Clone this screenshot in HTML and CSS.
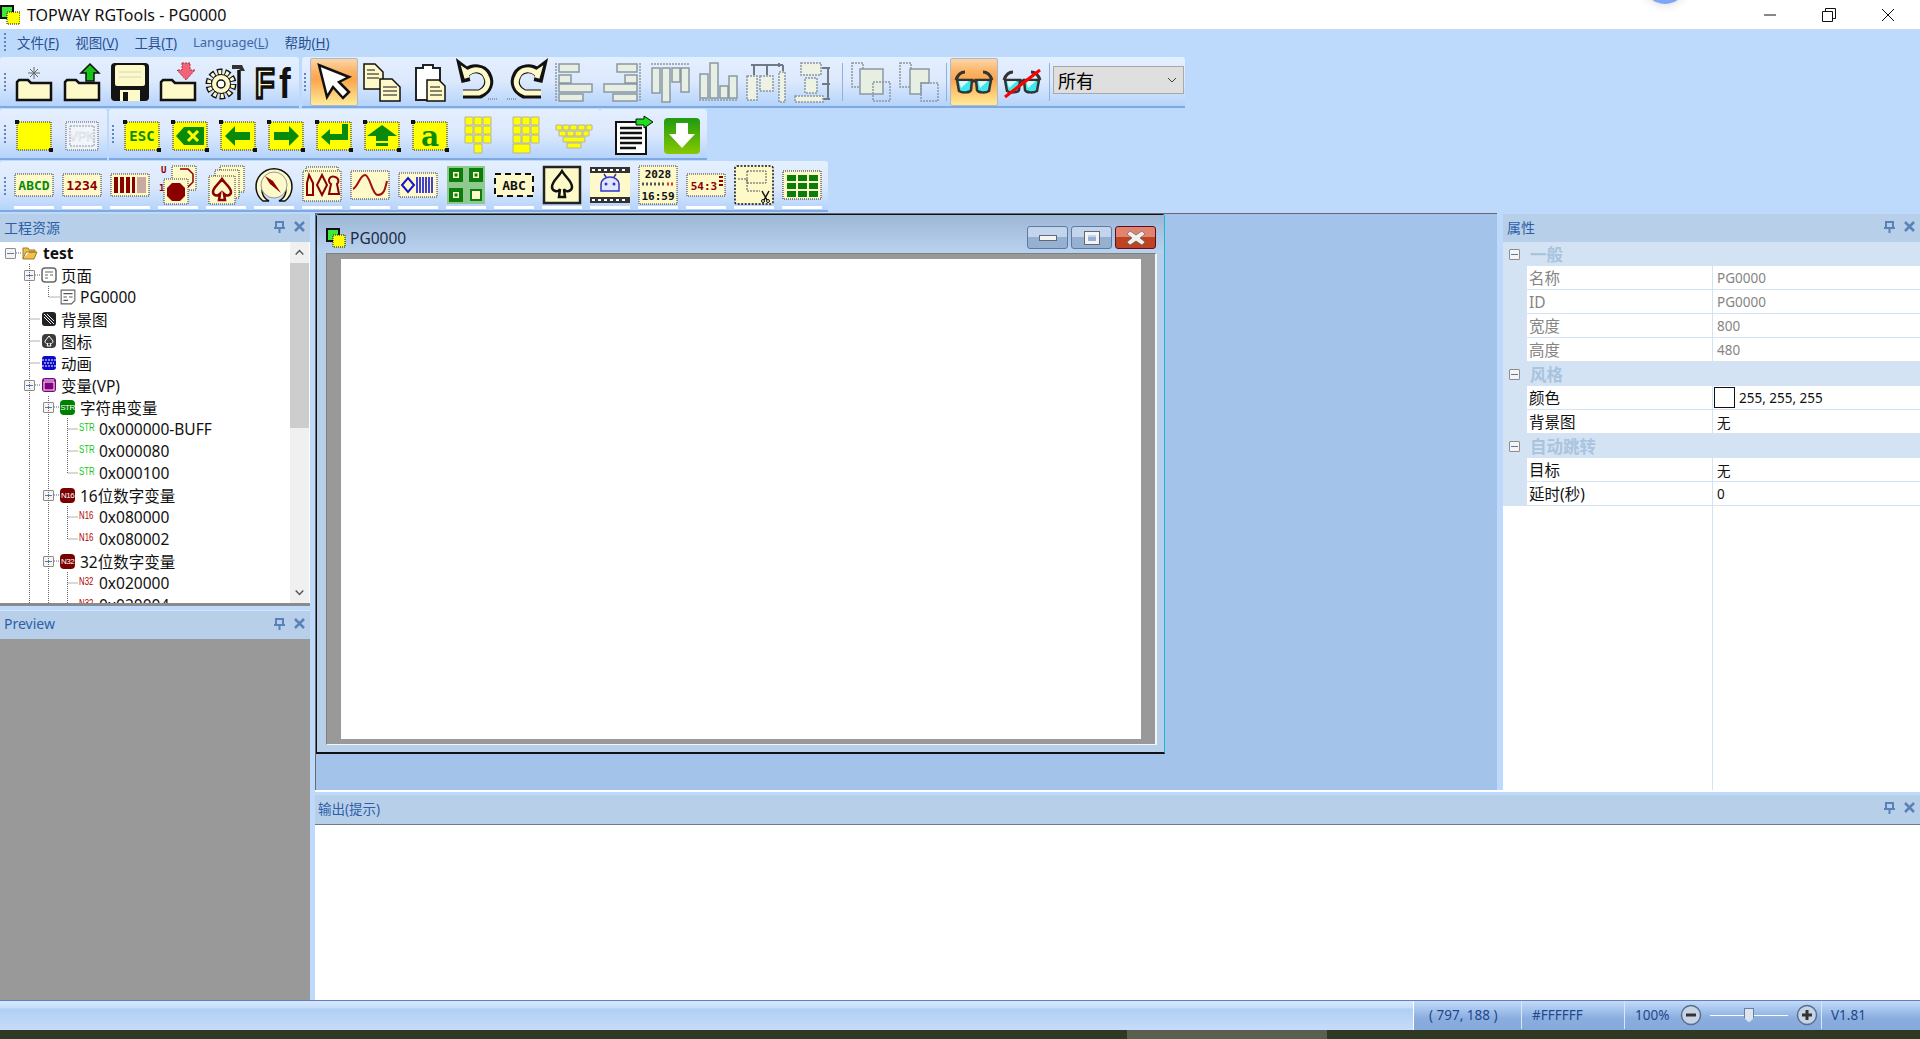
FILE: index.html
```html
<!DOCTYPE html>
<html lang="zh-CN">
<head>
    <meta charset="UTF-8">
    <title>TOPWAY RGTools - PG0000</title>
    <link rel="stylesheet" href="styles.css">
</head>
<body>
    <!-- 标题栏 -->
    <header class="titlebar">
        <svg class="app-icon" viewBox="0 0 20 20"><rect x="1" y="1" width="12" height="12" fill="#3fe83f" stroke="#111" stroke-width="2"/><rect x="7" y="7" width="13" height="12" fill="#ff0" stroke="#111" stroke-dasharray="1 1"/></svg>
        <span class="app-title">TOPWAY RGTools - PG0000</span>
        <div class="win-controls">
            <svg viewBox="0 0 14 14"><path d="M1 7h12" stroke="#111"/></svg>
            <svg viewBox="0 0 14 14"><path d="M.5 3.5h10v10H.5zM3.5 3.5v-3h10v10h-3" fill="none" stroke="#111"/></svg>
            <svg viewBox="0 0 14 14"><path d="M1 1l12 12M13 1L1 13" stroke="#111"/></svg>
        </div>
    </header>

    <!-- 菜单 -->
    <nav class="menubar">
        <span class="grip"></span>
        <span class="menu-item">文件(<u>F</u>)</span>
        <span class="menu-item">视图(<u>V</u>)</span>
        <span class="menu-item">工具(<u>T</u>)</span>
        <span class="menu-item lang">Language(<u>L</u>)</span>
        <span class="menu-item">帮助(<u>H</u>)</span>
    </nav>

    <!-- 工具栏第一行 -->
    <div class="tool-row">
        <div class="band band-file">
            <span class="grip"></span>
            <span class="tool"><svg class="ic" viewBox="0 0 40 40"><path class="cream" d="M3 38V20l2-2h9l3 3h20v17z"/><path d="M20 5v12M14 11h12M16 7l8 8M24 7l-8 8" stroke="#666"/></svg></span>
            <span class="tool"><svg class="ic" viewBox="0 0 40 40"><path class="cream" d="M3 38V20l2-2h9l3 3h20v17z"/><path d="M28 2l9 9h-5v8h-8v-8h-5z" fill="#19c219" stroke="#111" stroke-width="1.5"/></svg></span>
            <span class="tool"><svg class="ic" viewBox="0 0 40 40"><rect x="1" y="1" width="38" height="38" rx="4" fill="#141414"/><rect x="5" y="3" width="30" height="21" rx="2" fill="#fdf9c9"/><path d="M9 10h22M9 15h22" stroke="#cfd8c0"/><rect x="10" y="28" width="20" height="11" fill="#fdf9c9"/><rect x="13" y="30" width="5" height="9" fill="#141414"/></svg></span>
            <span class="tool"><svg class="ic" viewBox="0 0 40 40"><path class="cream" d="M3 38V20l2-2h9l3 3h20v17z"/><path d="M24 1h8v7h5l-9 10-9-10h5z" fill="#f2627b" stroke="#a33" stroke-dasharray="2 1"/></svg></span>
            <span class="tool"><svg class="ic" viewBox="0 0 40 40"><circle cx="15" cy="22" r="12" fill="none" stroke="#111" stroke-width="7" stroke-dasharray="5 2.5"/><circle cx="15" cy="22" r="12" fill="none" stroke="#fdf9c9" stroke-width="4" stroke-dasharray="3 4.5" stroke-dashoffset="-1"/><circle cx="15" cy="22" r="9.500" fill="#fdf9c9" stroke="#111"/><circle cx="15" cy="22" r="4" fill="#fff" stroke="#111" stroke-width="1.500"/><path d="M33 8v30" stroke="#111" stroke-width="3.500"/><path d="M26 3h10l3 6h-4l-2-2h-7z" fill="#333"/></svg></span>
            <span class="tool"><svg class="ic" viewBox="0 0 40 40"><text class="ff-big" transform="translate(1 36) scale(1 1.35)">F</text><text class="ff-small" transform="translate(25 36) scale(1.1 1.35)">f</text></svg></span>
        </div>
        <div class="band band-edit">
            <span class="grip"></span>
            <span class="tool selected"><svg class="ic" viewBox="0 0 40 40"><path d="M5 3l8 32 6-10 10 11 6-6-10-10 10-5z" fill="#fff" stroke="#111" stroke-width="2.5"/></svg></span>
            <span class="tool"><svg class="ic" viewBox="0 0 40 40"><path class="cream thin" d="M2 2h11l8 8v17H2z"/><path class="cream thin" d="M18 17h12l8 8v14H18z"/><path d="M5 8h8M5 12h12M5 16h12M21 25h14M21 29h14M21 33h14" stroke="#111"/></svg></span>
            <span class="tool"><svg class="ic" viewBox="0 0 40 40"><path d="M6 6h7v-3h10v3h7v32H6z" fill="#fff" stroke="#222" stroke-width="2"/><path class="cream thin" d="M17 18h12l6 6v15H17z"/><path d="M20 25h10M20 29h12M20 33h12" stroke="#111"/></svg></span>
            <span class="tool"><svg class="ic" viewBox="0 0 40 40"><path d="M8 20L5 7l4 3c6-5 16-4 20 3 4 8 1 15-7 19H5" fill="none" stroke="#111" stroke-width="9"/><path d="M9 16L7 9l3 2c6-5 15-4 18 3 4 7 1 14-7 17H5" fill="none" stroke="#fdf9c9" stroke-width="5"/><path d="M30 37h9" stroke="#666" stroke-dasharray="1 1"/></svg></span>
            <span class="tool"><svg class="ic" viewBox="0 0 40 40"><path d="M32 20l3-13-4 3c-6-5-16-4-20 3-4 8-1 15 7 19h17" fill="none" stroke="#111" stroke-width="9"/><path d="M31 16l2-7-3 2c-6-5-15-4-18 3-4 7-1 14 7 17h16" fill="none" stroke="#fdf9c9" stroke-width="5"/><path d="M1 37h9" stroke="#666" stroke-dasharray="1 1"/></svg></span>
            <span class="tool"><svg class="ic" viewBox="0 0 40 40"><path class="dots" d="M2 1v38"/><path class="off" d="M5 2h20v8H5zM5 13h12v8H5zM5 22h33v8H5zM5 32h24v7H5z"/></svg></span>
            <span class="tool"><svg class="ic" viewBox="0 0 40 40"><path class="dots" d="M38 1v38"/><path class="off" d="M15 2h20v8H15zM23 13h12v8H23zM2 22h33v8H2zM11 32h24v7H11z"/></svg></span>
            <span class="tool"><svg class="ic" viewBox="0 0 40 40"><path class="dots" d="M1 2h38"/><path class="off" d="M2 6h8v25H2zM12 6h8v34h-8zM22 6h8v14h-8zM31 6h8v24h-8z"/></svg></span>
            <span class="tool"><svg class="ic" viewBox="0 0 40 40"><path class="dots" d="M1 38h38"/><path class="off" d="M2 12h8v24H2zM12 1h8v35h-8zM22 24h8v12h-8zM31 14h8v22h-8z"/></svg></span>
            <span class="tool"><svg class="ic" viewBox="0 0 40 40"><path d="M5 3h32M8 3v10M21 3v10M37 3v6M33 1v4" stroke="#6e7a84" stroke-width="2"/><rect class="dots soft" x="1" y="14" width="10" height="24"/><rect class="dots soft" x="14" y="14" width="13" height="15"/><rect class="dots soft" x="33" y="10" width="6" height="30"/></svg></span>
            <span class="tool"><svg class="ic" viewBox="0 0 40 40"><path d="M34 6v32M28 6h8M28 22h8M28 37h8" stroke="#6e7a84" stroke-width="2"/><rect class="dots soft" x="7" y="1" width="20" height="12"/><rect class="dots soft" x="11" y="16" width="12" height="15"/><rect class="dots soft" x="1" y="34" width="28" height="6"/></svg></span>
            <span class="sep"></span>
            <span class="tool"><svg class="ic" viewBox="0 0 40 40"><rect class="dots" x="1" y="1" width="11" height="24"/><rect class="off" x="9" y="7" width="23" height="25"/><rect class="dots" x="22" y="20" width="17" height="19"/></svg></span>
            <span class="tool"><svg class="ic" viewBox="0 0 40 40"><rect class="dots" x="1" y="1" width="11" height="24"/><path class="off" d="M11 7h19v14H22v11H11z"/><rect class="dots" x="22" y="21" width="17" height="18"/></svg></span>
            <span class="sep sep-tight"></span>
            <span class="tool selected"><svg class="ic" viewBox="0 0 40 40"><use href="#glasses"/></svg></span>
            <span class="tool"><svg class="ic" viewBox="0 0 40 40"><use href="#glasses"/><path d="M3 35L38 8" stroke="#f00" stroke-width="3"/></svg></span>
            <span class="sep sep-tight"></span>
            <div class="combo">
                <span>所有</span>
                <svg viewBox="0 0 10 6"><path d="M1 1l4 4 4-4" fill="none" stroke="#444"/></svg>
            </div>
        </div>
    </div>

    <!-- 工具栏第二行 -->
    <div class="tool-row row-keys">
        <div class="band band-base">
            <span class="grip"></span>
            <span class="tool"><svg class="ic" viewBox="0 0 40 40"><use href="#keyframe"/></svg></span>
            <span class="tool"><svg class="ic" viewBox="0 0 40 40"><rect x="4" y="6" width="32" height="28" fill="#edf2f8" stroke="#555" stroke-dasharray="1 1"/><rect x="8" y="10" width="24" height="20" fill="#f2f5fa" stroke="#8a96a6" stroke-dasharray="2 1"/><text class="vpk" x="20" y="25">VPK</text></svg></span>
        </div>
        <div class="band band-keys">
            <span class="grip"></span>
            <span class="tool"><svg class="ic" viewBox="0 0 40 40"><use href="#keyframe"/><text class="esc" x="20" y="25">ESC</text></svg></span>
            <span class="tool"><svg class="ic" viewBox="0 0 40 40"><use href="#keyframe"/><path d="M6 20l8-9h20v18H14z" fill="#0a8a0a"/><path d="M18 15l10 10M28 15L18 25" stroke="#ff0" stroke-width="3"/></svg></span>
            <span class="tool"><svg class="ic" viewBox="0 0 40 40"><use href="#keyframe"/><path d="M7 20l10-10v6h15v8H17v6z" fill="#0a8a0a"/></svg></span>
            <span class="tool"><svg class="ic" viewBox="0 0 40 40"><use href="#keyframe"/><path d="M33 20L23 10v6H8v8h15v6z" fill="#0a8a0a"/></svg></span>
            <span class="tool"><svg class="ic" viewBox="0 0 40 40"><use href="#keyframe"/><path d="M7 21l9-8v5h12V8h6v16H16v5z" fill="#0a8a0a"/></svg></span>
            <span class="tool"><svg class="ic" viewBox="0 0 40 40"><use href="#keyframe"/><path d="M20 9l15 11h-9v5H14v-5H5zM14 27h12v3H14z" fill="#0a8a0a"/></svg></span>
            <span class="tool"><svg class="ic" viewBox="0 0 40 40"><use href="#keyframe"/><text class="key-a" x="20" y="30">a</text></svg></span>
            <span class="tool"><svg class="ic" viewBox="0 0 40 40"><path class="pad" d="M7 1h8v8H7zM16 1h8v8h-8zM25 1h8v8h-8zM7 10h8v8H7zM16 10h8v8h-8zM25 10h8v8h-8zM7 19h8v8H7zM16 19h8v8h-8zM25 19h8v8h-8zM16 28h8v9h-8z"/></svg></span>
            <span class="tool"><svg class="ic" viewBox="0 0 40 40"><path class="pad" d="M7 1h8v8H7zM16 1h8v8h-8zM25 1h8v8h-8zM7 10h8v8H7zM16 10h8v8h-8zM25 10h8v8h-8zM7 19h8v8H7zM16 19h8v8h-8zM25 19h8v8h-8zM7 28h17v9H7z"/></svg></span>
            <span class="tool"><svg class="ic" viewBox="0 0 40 40"><path class="pad" d="M2 9h6v5H2zM9 9h6v5H9zM16 9h7v5h-7zM24 9h7v5h-7zM32 9h6v5h-6zM5 15h7v5H5zM13 15h7v5h-7zM21 15h7v5h-7zM29 15h6v5h-6zM9 21h22v5H9zM13 27h14v5H13z"/></svg></span>
        </div>
        <div class="band band-ctrl">
            <span class="tool"><svg class="ic" viewBox="0 0 40 40"><rect x="2" y="6" width="30" height="32" fill="#fff" stroke="#111" stroke-width="2"/><path d="M6 12h22M6 17h22M6 22h22M6 27h22M6 32h16" stroke="#111" stroke-width="2.5"/><path d="M22 9V3h8V0l9 6-9 6V9z" fill="#19e019" stroke="#111"/></svg></span>
            <span class="tool"><svg class="ic" viewBox="0 0 40 40"><defs><linearGradient id="dlg" x1="0" y1="0" x2="0" y2="1"><stop offset="0" stop-color="#1f9a10"/><stop offset="1" stop-color="#88c800"/></linearGradient></defs><rect x="2" y="2" width="36" height="36" rx="4" fill="url(#dlg)"/><path d="M14 7h12v11h7L20 32 7 18h7z" fill="#fff"/></svg></span>
        </div>
    </div>

    <!-- 工具栏第三行 -->
    <div class="tool-row">
        <div class="band band-vars">
            <span class="grip"></span>
            <span class="tool lined"><svg class="ic" viewBox="0 0 40 40"><rect class="chip" x="1" y="9" width="38" height="22"/><text class="chip-text green" x="20" y="25">ABCD</text></svg></span>
            <span class="tool lined"><svg class="ic" viewBox="0 0 40 40"><rect class="chip" x="1" y="9" width="38" height="22"/><text class="chip-text red" x="20" y="25">1234</text></svg></span>
            <span class="tool lined"><svg class="ic" viewBox="0 0 40 40"><rect class="chip" x="1" y="9" width="38" height="22"/><path d="M4 12h4v16H4zM10 12h4v16h-4zM16 12h4v16h-4zM22 12h3v16h-3z" fill="#8b0000"/><path d="M27 12h9v16h-9z" fill="#c9a9a0"/></svg></span>
            <span class="tool lined"><svg class="ic" viewBox="0 0 40 40"><rect class="chip" x="14" y="1" width="24" height="24"/><path d="M22 4h8l5 5v8l-5 5" fill="none" stroke="#8b0000" stroke-width="1.5"/><rect class="chip" x="6" y="14" width="24" height="25"/><path d="M14 18h8l5 5v8l-5 5h-8l-5-5v-8z" fill="#8b0000"/><text class="mini red" x="3" y="8">U</text><text class="mini red" x="1" y="26">1</text></svg></span>
            <span class="tool lined"><svg class="ic" viewBox="0 0 40 40"><rect class="chip" x="14" y="1" width="24" height="26"/><rect class="chip" x="9" y="5" width="24" height="28"/><rect class="chip" x="3" y="11" width="26" height="28"/><path d="M16 14c4 6 9 8 9 13 0 3-4 5-7 2l1 6h-6l1-6c-3 3-7 1-7-2 0-5 5-7 9-13z" fill="none" stroke="#8b0000" stroke-width="2.5"/></svg></span>
            <span class="tool lined"><svg class="ic" viewBox="0 0 40 40"><path d="M9 36a18 18 0 1 1 22 0h-6a12 12 0 1 0-10 0z" fill="#fdf9c9" stroke="#111" stroke-width="1.5"/><circle cx="20" cy="20" r="13" fill="#fdf9c9" stroke="#999"/><path d="M11 11l8 5 8 12-11-9z" fill="#8b0000"/></svg></span>
            <span class="tool lined"><svg class="ic" viewBox="0 0 40 40"><rect class="chip" x="4" y="2" width="32" height="6"/><rect class="chip" x="1" y="6" width="38" height="30"/><path d="M7 10l4 8v12H5V18zM20 10l5 10-5 10-5-10zM33 12a4 4 0 0 1 2 7l2 10H27l2-10a4 4 0 0 1 4-7z" fill="none" stroke="#8b0000" stroke-width="2"/></svg></span>
            <span class="tool lined"><svg class="ic" viewBox="0 0 40 40"><rect class="chip" x="1" y="6" width="38" height="28"/><path d="M3 24c5-2 7-14 12-14s7 20 13 20 7-6 9-14" fill="none" stroke="#a01010" stroke-width="2"/></svg></span>
            <span class="tool lined"><svg class="ic" viewBox="0 0 40 40"><rect class="chip" x="1" y="8" width="38" height="24"/><path d="M10 13l6 7-6 7-6-7z" fill="none" stroke="#1515d0" stroke-width="2"/><path d="M19 12v16M22 12v16M25 12v16M28 12v16M31 12v16M34 12v16" stroke="#1515d0" stroke-width="1.6"/></svg></span>
            <span class="tool lined"><svg class="ic" viewBox="0 0 40 40"><rect x="1" y="1" width="38" height="38" fill="#8fc98f"/><path d="M3 3h14v14H3zM23 3h14v14H23zM3 23h14v14H3z" fill="#0a7d0a"/><path d="M7 7h6v6H7zM27 7h6v6h-6zM7 27h6v6H7z" fill="#fdf9c9"/><path d="M8.500 8.500h3v3h-3zM28.500 8.500h3v3h-3zM8.500 28.500h3v3h-3z" fill="#0a7d0a"/><rect x="25" y="25" width="10" height="10" fill="#fdf9c9" stroke="#0a7d0a" stroke-width="2"/></svg></span>
            <span class="tool lined"><svg class="ic" viewBox="0 0 40 40"><rect x="1" y="9" width="38" height="22" fill="#fdf9c9" stroke="#111" stroke-width="2" stroke-dasharray="6 4"/><text class="chip-text dark" x="20" y="25">ABC</text></svg></span>
            <span class="tool lined"><svg class="ic" viewBox="0 0 40 40"><rect x="2" y="2" width="36" height="36" fill="#fdf9c9" stroke="#222" stroke-width="2.5"/><path d="M20 6c4 7 10 10 10 16 0 4-6 6-8 2l1 8h-6l1-8c-2 4-8 2-8-2 0-6 6-9 10-16z" fill="none" stroke="#111" stroke-width="2.5"/></svg></span>
            <span class="tool lined"><svg class="ic" viewBox="0 0 40 40"><rect x="0" y="2" width="40" height="36" fill="#333"/><path d="M0 8h40v24H0z" fill="#fdf9c9"/><path d="M2 4h3v2H2zM8 4h3v2H8zM14 4h3v2h-3zM20 4h3v2h-3zM26 4h3v2h-3zM32 4h3v2h-3zM2 34h3v2H2zM8 34h3v2H8zM14 34h3v2h-3zM20 34h3v2h-3zM26 34h3v2h-3zM32 34h3v2h-3z" fill="#fff"/><path d="M11 26v-7a9 7 0 0 1 18 0v7zM16 12l-2-3M24 12l2-3" fill="#dfe6ff" stroke="#3434c8" stroke-width="1.500"/><circle cx="16" cy="19" r="1.500" fill="#3434c8"/><circle cx="24" cy="19" r="1.500" fill="#3434c8"/></svg></span>
            <span class="tool lined"><svg class="ic" viewBox="0 0 40 40"><rect class="chip" x="1" y="1" width="38" height="38"/><text class="date" x="20" y="13">2028</text><path d="M4 19h24" stroke="#555" stroke-dasharray="2 2" stroke-width="3"/><path d="M29 19h8" stroke="#d33" stroke-dasharray="2 2" stroke-width="3"/><text class="date" x="20" y="35">16:59</text></svg></span>
            <span class="tool lined"><svg class="ic" viewBox="0 0 40 40"><rect class="chip" x="1" y="9" width="38" height="22"/><text class="chip-text red small" x="18" y="25">54:3</text><path d="M33 12h4M33 16h4M33 20h4" stroke="#8b0000" stroke-width="2"/></svg></span>
            <span class="tool lined"><svg class="ic" viewBox="0 0 40 40"><rect x="1" y="1" width="38" height="38" rx="2" fill="#fdf9c9" stroke="#111" stroke-dasharray="2 1.500" stroke-width="1.500"/><path d="M13 6h19v12H13zM4 14h9v12h13" fill="none" stroke="#555" stroke-dasharray="2 1"/><path d="M28 26l5 9M35 26l-5 9" stroke="#111" stroke-width="1.500"/><circle cx="29" cy="36" r="1.500" fill="none" stroke="#111"/><circle cx="34" cy="36" r="1.500" fill="none" stroke="#111"/></svg></span>
            <span class="tool lined"><svg class="ic" viewBox="0 0 40 40"><rect x="1" y="6" width="38" height="28" fill="#fdf9c9" stroke="#222" stroke-dasharray="1 1"/><path d="M5 10h9v6H5zM16 10h9v6h-9zM27 10h9v6h-9zM5 18h9v6H5zM16 18h9v6h-9zM27 18h9v6h-9zM5 26h9v6H5zM16 26h9v6h-9zM27 26h9v6h-9z" fill="#0a7d0a"/></svg></span>
        </div>
    </div>

    <!-- 主工作区 -->
    <main class="workspace">
        <aside class="left-col">
            <section class="dock project-dock">
                <div class="dock-head"><span>工程资源</span><svg class="dock-btns" viewBox="0 0 32 14"><use href="#dock-btns"/></svg></div>
                <div class="tree-wrap">
                    <div class="tree">
                        <svg class="tree-lines" viewBox="0 0 290 361"><path d="M16 11H22M29.500 22V361M35 33H40M48.500 44V55H60M29.500 77H40M29.500 99H40M29.500 121H40M35 143H40M48.500 154V361M54 165H60M54 253H60M54 319H60M67.500 176V231H78M67.500 187H78M67.500 209H78M67.500 264V297H78M67.500 275H78M67.500 330V361M67.500 341H78" fill="none" stroke="#666" stroke-dasharray="1 1"/></svg>
                        <div class="node lv0"><span class="toggle"></span><svg class="node-ic" viewBox="0 0 16 16"><path d="M1 14V3h5l1 2h6v2H4l-3 7h11l3-7H7" fill="#f3c04d" stroke="#9a7a2a"/></svg><b>test</b></div>
                        <div class="node lv1"><span class="toggle"></span><svg class="node-ic" viewBox="0 0 16 16"><rect x="1" y="1" width="14" height="14" rx="3" fill="#fff" stroke="#666" stroke-width="1.500"/><path d="M4 5h8M4 8h3M9 8h3M4 11h3" stroke="#666"/></svg><span>页面</span></div>
                        <div class="node lv2 leaf"><svg class="node-ic" viewBox="0 0 14 14"><path d="M1 1h12v9l-3 3H1z" fill="#fff" stroke="#666"/><path d="M3 4h8M3 7h3M8 7h3M3 10h4" stroke="#555"/></svg><span>PG0000</span></div>
                        <div class="node lv1 nochild"><svg class="node-ic" viewBox="0 0 16 16"><rect x="1" y="1" width="14" height="14" rx="3" fill="#222"/><path d="M3 6l7 7M3 3l10 10M6 3l7 7" stroke="#eee"/></svg><span>背景图</span></div>
                        <div class="node lv1 nochild"><svg class="node-ic" viewBox="0 0 16 16"><rect x="1" y="1" width="14" height="14" rx="4" fill="#3c3c3c"/><path d="M8 3l4 5c0 3-3 3-3 2l1 3H6l1-3c0 1-3 1-3-2z" fill="none" stroke="#fff"/></svg><span>图标</span></div>
                        <div class="node lv1 nochild"><svg class="node-ic" viewBox="0 0 16 16"><rect x="1" y="1" width="14" height="14" rx="3" fill="#0a0ac8"/><path d="M1 5h14M1 11h14M3 8h10" stroke="#fff" stroke-dasharray="2 1"/></svg><span>动画</span></div>
                        <div class="node lv1"><span class="toggle"></span><svg class="node-ic" viewBox="0 0 16 16"><rect x="1" y="1" width="14" height="14" rx="3" fill="#800080"/><rect x="3" y="5" width="10" height="8" fill="none" stroke="#fff"/><path d="M3 3h10" stroke="#fff"/></svg><span>变量(VP)</span></div>
                        <div class="node lv2"><span class="toggle"></span><span class="badge b-str">STR</span><span>字符串变量</span></div>
                        <div class="node lv3"><span class="tag t-str">STR</span><span>0x000000-BUFF</span></div>
                        <div class="node lv3"><span class="tag t-str">STR</span><span>0x000080</span></div>
                        <div class="node lv3"><span class="tag t-str">STR</span><span>0x000100</span></div>
                        <div class="node lv2"><span class="toggle"></span><span class="badge b-num">N16</span><span>16位数字变量</span></div>
                        <div class="node lv3"><span class="tag t-num">N16</span><span>0x080000</span></div>
                        <div class="node lv3"><span class="tag t-num">N16</span><span>0x080002</span></div>
                        <div class="node lv2"><span class="toggle"></span><span class="badge b-num">N32</span><span>32位数字变量</span></div>
                        <div class="node lv3"><span class="tag t-num">N32</span><span>0x020000</span></div>
                        <div class="node lv3"><span class="tag t-num">N32</span><span>0x020004</span></div>
                    </div>
                    <div class="scrollbar">
                        <svg viewBox="0 0 20 20"><path d="M6 12l4-4 4 4" fill="none" stroke="#555" stroke-width="1.500"/></svg>
                        <div class="scroll-track"><div class="scroll-thumb"></div></div>
                        <svg viewBox="0 0 20 20"><path d="M6 8l4 4 4-4" fill="none" stroke="#555" stroke-width="1.500"/></svg>
                    </div>
                </div>
            </section>
            <section class="dock preview-dock">
                <div class="dock-head"><span>Preview</span><svg class="dock-btns" viewBox="0 0 32 14"><use href="#dock-btns"/></svg></div>
                <div class="preview-body"></div>
            </section>
        </aside>

        <div class="right-col">
            <div class="upper">
                <div class="mdi">
                    <div class="child-win">
                        <div class="child-title">
                            <svg class="child-icon" viewBox="0 0 20 20"><rect x="1" y="1" width="12" height="12" fill="#3fe83f" stroke="#111" stroke-width="2"/><rect x="7" y="7" width="12" height="12" fill="#ff0" stroke="#111" stroke-dasharray="1 1"/></svg>
                            <span class="child-name">PG0000</span>
                            <span class="cap-btn"><svg viewBox="0 0 18 14"><rect x="0.500" y="4.500" width="17" height="5" fill="#f4f4f4" stroke="#667"/></svg></span>
                            <span class="cap-btn"><svg viewBox="0 0 18 16"><rect x="1.500" y="1.500" width="15" height="13" fill="none" stroke="#667"/><rect x="3.500" y="3.500" width="11" height="9" fill="none" stroke="#f4f4f4" stroke-width="3"/></svg></span>
                            <span class="cap-btn cap-close"><svg viewBox="0 0 18 14"><path d="M3 0l6 4 6-4 3 3-5 4 5 4-3 3-6-4-6 4-3-3 5-4-5-4z" fill="#f1f1f1" stroke="#555" stroke-width=".6"/></svg></span>
                        </div>
                        <div class="client">
                            <div class="canvas"></div>
                        </div>
                    </div>
                </div>

                <section class="props">
                    <div class="dock-head"><span>属性</span><svg class="dock-btns" viewBox="0 0 32 14"><use href="#dock-btns"/></svg></div>
                    <div class="prop-list">
                        <div class="prop-group"><span class="toggle"></span>一般</div>
                        <div class="prop-row off-row"><span>名称</span><span>PG0000</span></div>
                        <div class="prop-row off-row"><span>ID</span><span>PG0000</span></div>
                        <div class="prop-row off-row"><span>宽度</span><span>800</span></div>
                        <div class="prop-row off-row"><span>高度</span><span>480</span></div>
                        <div class="prop-group"><span class="toggle"></span>风格</div>
                        <div class="prop-row"><span>颜色</span><span class="color-val"><i class="swatch"></i>255, 255, 255</span></div>
                        <div class="prop-row"><span>背景图</span><span>无</span></div>
                        <div class="prop-group"><span class="toggle"></span>自动跳转</div>
                        <div class="prop-row"><span>目标</span><span>无</span></div>
                        <div class="prop-row"><span>延时(秒)</span><span>0</span></div>
                    </div>
                </section>
            </div>

            <section class="output">
                <div class="dock-head"><span>输出(提示)</span><svg class="dock-btns" viewBox="0 0 32 14"><use href="#dock-btns"/></svg></div>
                <div class="output-body"></div>
            </section>
        </div>
    </main>

    <!-- 状态栏 -->
    <footer class="statusbar">
        <div class="status-fill"></div>
        <div class="status-right">
            <span class="cell cell-pos">( 797, 188 )</span>
            <span class="cell cell-color">#FFFFFF</span>
            <span class="cell cell-zoom">
                <span>100%</span>
                <svg class="zoom-btn" viewBox="0 0 22 22"><circle cx="11" cy="11" r="9.500" fill="#c6d4e6" stroke="#5a6f8f" stroke-width="1.500"/><path d="M6 11h10" stroke="#333" stroke-width="3"/></svg>
                <span class="slider"><i class="slider-thumb"></i></span>
                <svg class="zoom-btn" viewBox="0 0 22 22"><circle cx="11" cy="11" r="9.500" fill="#c6d4e6" stroke="#5a6f8f" stroke-width="1.500"/><path d="M6 11h10M11 6v10" stroke="#333" stroke-width="3"/></svg>
            </span>
            <span class="cell cell-ver">V1.81</span>
        </div>
    </footer>
    <div class="taskbar"><span class="task-active"></span><span class="task-clock">20:54</span></div>

    <span class="float-ball"></span>

    <!-- 重复使用的图形 -->
    <svg class="defs" width="0" height="0">
        <symbol id="keyframe" viewBox="0 0 40 40">
            <rect x="3" y="6" width="34" height="28" fill="#ff0" stroke="#222" stroke-dasharray="1 1"/>
            <rect x="1" y="4" width="4" height="4" fill="#111"/>
            <rect x="35" y="32" width="4" height="4" fill="#111"/>
        </symbol>
        <symbol id="glasses" viewBox="0 0 40 40">
            <path d="M2 18c2-6 5-8 9-8M38 18c-2-6-5-8-9-8M15 19h10" fill="none" stroke="#333" stroke-width="3"/>
            <path d="M3 18h15l-1 10c-1 3-9 3-12 1z" fill="#3de8ee" stroke="#333" stroke-width="2.500"/>
            <path d="M22 18h15l-2 11c-3 2-11 2-12-1z" fill="#3de8ee" stroke="#333" stroke-width="2.500"/>
            <path d="M5 19h10l-8 7zM24 19h10l-8 7z" fill="#fff" opacity=".8"/>
        </symbol>
        <symbol id="dock-btns" viewBox="0 0 32 14">
            <path d="M2 2h7v6H2zM0 8h11M5.500 8v5" fill="none" stroke="#5b82b8" stroke-width="2"/>
            <path d="M21 2l9 9M30 2l-9 9" stroke="#5b82b8" stroke-width="2.500"/>
        </symbol>
    </svg>
</body>
</html>
```

FILE: styles.css
```css
* {
    margin: 0;
    padding: 0;
    box-sizing: border-box;
}

body {
    height: 100vh;
    overflow: hidden;
    display: flex;
    flex-direction: column;
    background: #bddafd;
    font-family: "Noto Sans", "Noto Sans CJK SC", sans-serif;
    color: #111;
}

/* 标题栏 */
.titlebar {
    height: 29px;
    flex-shrink: 0;
    display: flex;
    align-items: center;
    background: #fff;
}

.app-icon {
    width: 20px;
    height: 20px;
    margin-right: 7px;
}

.app-title {
    font-size: 16px;
}

.win-controls {
    margin-left: auto;
    display: flex;
    gap: 45px;
    padding-right: 25px;
}

.win-controls svg {
    width: 14px;
    height: 14px;
}

/* 右上角悬浮球 */
.float-ball {
    position: absolute;
    top: -18px;
    left: 1643px;
    width: 44px;
    height: 22px;
    border-radius: 0 0 22px 22px;
    background: #7ea6f8;
    box-shadow: 0 2px 8px rgba(0, 0, 0, 0.12);
}

/* 菜单 */
.menubar {
    height: 28px;
    flex-shrink: 0;
    display: flex;
    align-items: center;
    padding: 0 0 2px 4px;
}

.menu-item {
    font-size: 13.5px;
    color: #2a4f8f;
    margin-right: 16px;
}

.menu-item.lang {
    font-size: 13px;
    color: #3f67a6;
}

.grip {
    width: 2px;
    height: 18px;
    flex-shrink: 0;
    background: repeating-linear-gradient(to bottom, #5f86bd 0 2px, transparent 2px 4px);
}

.menubar .grip {
    margin-right: 11px;
}

/* 工具栏 */
.tool-row {
    height: 52px;
    flex-shrink: 0;
    display: flex;
}

.band {
    display: flex;
    align-items: center;
    height: 51px;
    padding-left: 4px;
    border-bottom: 2px solid #7ea9e1;
    border-radius: 3px 3px 0 0;
    background: linear-gradient(to bottom, #e4effe 0%, #dce9fd 50%, #b5d3fb 100%);
}

.band .grip {
    margin-right: 4px;
}

.band-file {
    width: 299px;
    margin-right: 3px;
}

.band-edit {
    width: 883px;
    padding-left: 2px;
}

.band-base {
    width: 107px;
    margin-right: 2px;
}

.band-keys {
    width: 491px;
    padding-left: 3px;
}

.band-keys .grip {
    margin-right: 4px;
}

.band-ctrl {
    width: 107px;
    padding-left: 10px;
}

.band-vars {
    width: 828px;
}

.tool {
    width: 48px;
    height: 48px;
    flex-shrink: 0;
    display: flex;
    align-items: center;
    justify-content: center;
}

/* 第二行图标略靠下 */
.row-keys .tool {
    padding-top: 4px;
}

.tool.selected {
    border: 1px solid #a9b9d0;
    border-radius: 2px;
    background: linear-gradient(to bottom, #fdd6a8 0%, #fbb364 28%, #fca64c 45%, #fdc66d 70%, #ffeb98 100%);
}

.tool.lined {
    position: relative;
    align-items: flex-start;
    padding-top: 3px;
}

/* 工具按钮下方的白条 */
.tool.lined::after {
    content: "";
    position: absolute;
    left: 4px;
    right: 4px;
    bottom: 1px;
    height: 3px;
    background: #fff;
}

.sep {
    width: 1px;
    height: 38px;
    margin: 0 4px 0 4px;
    background: #8fb1dd;
}

.sep-tight {
    margin: 0 3px;
}

.ic {
    width: 40px;
    height: 40px;
    display: block;
    overflow: visible;
}

.cream {
    fill: #fdf9c9;
    stroke: #111;
    stroke-width: 2.5;
}

.cream.thin {
    stroke-width: 1.5;
}

.off {
    fill: #e6efe2;
    stroke: #8b98a3;
    stroke-width: 1.5;
}

.dots {
    fill: none;
    stroke: #8b98a3;
    stroke-width: 1.5;
    stroke-dasharray: 2 1;
}

.dots.soft {
    fill: #eef2e2;
}

.pad {
    fill: #ff0;
    stroke: #b4b4a0;
    stroke-width: 1;
}

.chip {
    fill: #fdf9c9;
    stroke: #333;
    stroke-width: 1;
    stroke-dasharray: 1 1;
}

.ff-big {
    font: bold 32px "Liberation Sans", sans-serif;
    fill: #fdf9c9;
    stroke: #111;
    stroke-width: 2.5;
}

.ff-small {
    font: bold 32px "Liberation Sans", sans-serif;
    fill: #111;
}

.vpk {
    font: 13px "Liberation Sans", sans-serif;
    fill: #fff;
    stroke: #c7d2df;
    stroke-width: 0.5;
    text-anchor: middle;
}

.esc {
    font: bold 14px "DejaVu Sans Mono", monospace;
    fill: #0a8a0a;
    text-anchor: middle;
}

.key-a {
    font: bold 28px "DejaVu Serif", serif;
    fill: #0a8a0a;
    text-anchor: middle;
}

.chip-text {
    font: bold 13px "DejaVu Sans Mono", monospace;
    text-anchor: middle;
}

.chip-text.small {
    font-size: 11px;
}

.green { fill: #0a8a0a; }
.red { fill: #8b0000; }
.dark { fill: #111; }

.mini {
    font: bold 9px "DejaVu Sans Mono", monospace;
}

.date {
    font: bold 11px "DejaVu Sans Mono", monospace;
    fill: #111;
    text-anchor: middle;
}

.combo {
    width: 131px;
    height: 28px;
    margin-bottom: 4px;
    display: flex;
    align-items: center;
    justify-content: space-between;
    padding: 0 6px 0 4px;
    border: 1px solid #a8a8a8;
    background: #dfdfdf;
    font-size: 18px;
    color: #000;
}

.combo svg {
    width: 10px;
    height: 6px;
}

/* 主工作区 */
.workspace {
    flex: 1;
    min-height: 0;
    display: grid;
    grid-template-columns: 310px 1fr;
    column-gap: 5px;
}

.left-col {
    display: flex;
    flex-direction: column;
    min-height: 0;
    padding-top: 1px;
}

.right-col {
    display: flex;
    flex-direction: column;
    min-width: 0;
    min-height: 0;
}

.dock-head {
    height: 28px;
    flex-shrink: 0;
    display: flex;
    align-items: center;
    justify-content: space-between;
    padding: 0 4px 3px 4px;
    background: #b8cfe9;
    font-size: 14px;
    color: #2d5fa8;
}

.dock-btns {
    width: 32px;
    height: 14px;
}

.project-dock {
    height: 392px;
    flex-shrink: 0;
    display: flex;
    flex-direction: column;
    border-bottom: 3px solid #8b8b8b;
}

.tree-wrap {
    flex: 1;
    min-height: 0;
    display: flex;
    background: #fff;
}

.tree {
    position: relative;
    flex: 1;
    overflow: hidden;
}

/* 树的连接虚线 */
.tree-lines {
    position: absolute;
    left: 0;
    top: 0;
    width: 290px;
    height: 361px;
    pointer-events: none;
}

.node {
    height: 22px;
    display: flex;
    align-items: center;
    font-size: 15.5px;
    white-space: nowrap;
}

.node b {
    font-weight: 700;
}

.node-ic {
    width: 16px;
    height: 16px;
    flex-shrink: 0;
    margin-right: 4px;
}

.toggle {
    width: 11px;
    height: 11px;
    flex-shrink: 0;
    display: inline-block;
    border: 1px solid #8d8d8d;
    border-radius: 1px;
    margin-right: 6px;
    background: linear-gradient(to bottom, #5a78a8, #5a78a8) center / 7px 1px no-repeat, #f4f4f4;
}

.lv0 { padding-left: 5px; }
.lv1 { padding-left: 24px; }
.lv1.nochild { padding-left: 41px; }
.lv2 { padding-left: 43px; }
.lv2.leaf { padding-left: 60px; }
.lv3 { padding-left: 79px; }

.lv0 .node-ic { margin-right: 5px; }

.badge {
    width: 15px;
    height: 15px;
    flex-shrink: 0;
    margin-right: 5px;
    border-radius: 4px;
    text-align: center;
    font: 8px/15px "Liberation Sans", sans-serif;
    letter-spacing: -0.5px;
    color: #fff;
}

.b-str { background: #008000; }
.b-num { background: #7a0000; }

.tag {
    width: 20px;
    flex-shrink: 0;
    font: 10px/14px "Liberation Sans", sans-serif;
    margin-top: -3px;
    transform: scaleX(0.78);
    transform-origin: left center;
}

.t-str { color: #10c810; }
.t-num { color: #b00000; }

.scrollbar {
    width: 19px;
    flex-shrink: 0;
    margin-right: 1px;
    display: flex;
    flex-direction: column;
    background: #f0f0f0;
}

.scrollbar svg {
    width: 19px;
    height: 21px;
    flex-shrink: 0;
}

.scroll-track {
    flex: 1;
}

.scroll-thumb {
    height: 165px;
    background: #cdcdcd;
}

.preview-dock {
    flex: 1;
    min-height: 0;
    display: flex;
    flex-direction: column;
    margin-top: 4px;
    border-top: 1px solid #d4e4fb;
}

.preview-body {
    flex: 1;
    background: #999;
}

.upper {
    height: 577px;
    flex-shrink: 0;
    display: flex;
    gap: 6px;
}

/* 子窗口区域 */
.mdi {
    width: 1182px;
    flex-shrink: 0;
    border-left: 1px solid #696969;
    border-top: 1px solid #696969;
    background: #a3c3ea;
}

.child-win {
    width: 849px;
    height: 540px;
    display: flex;
    flex-direction: column;
    border: 1px solid #111;
    border-right-color: #16b8d8;
    border-bottom-width: 2px;
    border-radius: 3px 3px 0 0;
    background: #b8cfea;
}

.child-title {
    height: 38px;
    flex-shrink: 0;
    display: flex;
    align-items: center;
    gap: 3px;
    padding: 7px 8px 0 9px;
    background: linear-gradient(to bottom, #9db7d6, #b9d2ef);
}

.child-icon {
    width: 20px;
    height: 20px;
    margin-right: 1px;
}

.child-name {
    font-size: 15.5px;
    color: #1c2b44;
    margin-right: auto;
}

.cap-btn {
    width: 41px;
    height: 23px;
    display: flex;
    align-items: center;
    justify-content: center;
    border: 1px solid #5d7aa0;
    border-radius: 3px;
    background: linear-gradient(to bottom, #c2d5ec 0 48%, #95b0d0 48% 100%);
}

.cap-btn svg {
    width: 18px;
    height: 16px;
}

.cap-close {
    border-color: #5b0f20;
    background: linear-gradient(to bottom, #e2836f 0 48%, #bd4323 48% 100%);
}

.client {
    margin: 0 7px 0 9px;
    height: 492px;
    padding: 5px 14px;
    background: #999;
    border-right: 2px solid #f2f5fa;
    border-bottom: 1px solid #f2f5fa;
    border-top: 1px solid #7f7f7f;
    border-left: 1px solid #7f7f7f;
}

.canvas {
    width: 800px;
    height: 480px;
    background: #fff;
}

/* 属性面板 */
.props {
    flex: 1;
    min-width: 0;
    margin-top: 1px;
    display: flex;
    flex-direction: column;
    background: #fff;
}

.prop-list {
    flex: 1;
    background: linear-gradient(#d3e3f3, #d3e3f3) 209px 0 / 1px 100% no-repeat;
}

.prop-group {
    height: 24px;
    display: flex;
    align-items: center;
    padding-left: 6px;
    background: #d3e3f3;
    font-size: 16.5px;
    font-weight: 700;
    color: #a9c4de;
}

.prop-group .toggle {
    margin-right: 10px;
}

.prop-row {
    height: 24px;
    display: grid;
    grid-template-columns: 24px 185px 1fr;
    align-items: center;
    border-bottom: 1px solid #d3e3f3;
    font-size: 15.5px;
}

.prop-row::before {
    content: "";
    align-self: stretch;
    margin-bottom: -1px;
    background: #d3e3f3;
}

.prop-row span:first-child {
    padding-left: 2px;
}

.prop-row span:last-child {
    padding-left: 5px;
    font-size: 13.5px;
}

.off-row {
    color: #858585;
}

.color-val {
    display: flex;
    align-items: center;
    gap: 4px;
    padding-left: 2px !important;
}

.swatch {
    width: 21px;
    height: 21px;
    border: 1px solid #111;
    background: #fff;
}

/* 输出面板 */
.output {
    flex: 1;
    min-height: 0;
    display: flex;
    flex-direction: column;
    border-top: 2px solid #fff;
    padding-top: 3px;
}

.output .dock-head {
    height: 30px;
    padding-left: 3px;
    font-size: 13.5px;
    border-bottom: 1px solid #6d7a8a;
}

.output-body {
    flex: 1;
    background: #fff;
}

/* 状态栏 */
.statusbar {
    height: 30px;
    flex-shrink: 0;
    display: flex;
    border-top: 1px solid #5c82c0;
    font-size: 13.5px;
    color: #23478c;
}

.status-fill {
    width: 1414px;
    flex-shrink: 0;
    background: linear-gradient(to bottom, #d7e7fc 0%, #c9def9 22%, #b0cff5 28%, #c7dcf8 100%);
    border-right: 1px solid #fff;
}

.status-right {
    flex: 1;
    display: flex;
    background: linear-gradient(to bottom, #c5daf7 0%, #a9c8f0 25%, #8aadde 60%, #86a9dd 100%);
}

.cell {
    height: 28px;
    display: flex;
    align-items: center;
    border-right: 1px solid #dbe7f8;
    padding-left: 13px;
}

.cell-pos { width: 108px; padding-left: 15px; }
.cell-color { width: 103px; padding-left: 10px; }
.cell-zoom { width: 197px; padding-left: 10px; }
.cell-ver { border-right: 0; padding-left: 9px; }

.zoom-btn {
    width: 22px;
    height: 22px;
    flex-shrink: 0;
}

.cell-zoom span:first-child {
    width: 45px;
}

.slider {
    position: relative;
    width: 78px;
    height: 1px;
    margin: 0 8px;
    background: #fff;
}

.slider-thumb {
    position: absolute;
    left: 34px;
    top: -7px;
    width: 10px;
    height: 15px;
    background: #dbe4ef;
    border: 1px solid #6a7f9e;
    clip-path: polygon(0 0, 100% 0, 100% 70%, 50% 100%, 0 70%);
}

/* 任务栏 */
.taskbar {
    height: 9px;
    flex-shrink: 0;
    display: flex;
    overflow: hidden;
    background: #2f3822;
    position: relative;
}

.task-active {
    width: 200px;
    margin-left: 1127px;
    background: #5a6050;
}

.task-clock {
    position: absolute;
    left: 1787px;
    top: 5px;
    font-size: 12px;
    font-weight: 700;
    color: #fff;
}

.defs {
    position: absolute;
}
```
